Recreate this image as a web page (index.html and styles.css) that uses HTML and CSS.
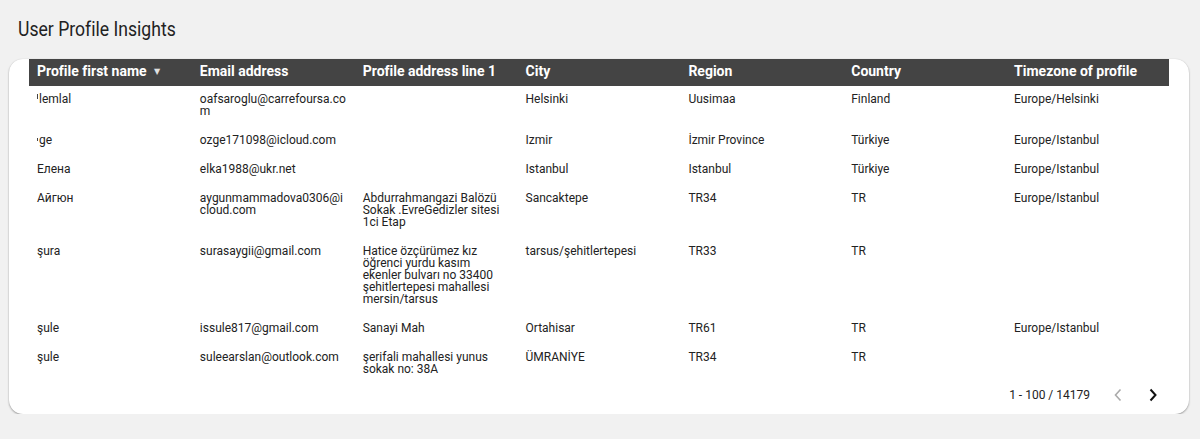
FILE: index.html
```html
<!DOCTYPE html>
<html lang="tr">
<head>
<meta charset="utf-8">
<title>User Profile Insights</title>
<link rel="stylesheet" href="styles.css">
</head>
<body>
<div class="page">
  <h1 class="title"><span class="title-text">User Profile Insights</span></h1>
  <div class="card">
    <div class="grid-wrap">
      <table class="grid">
        <thead>
          <tr>
            <th>Profile first name <span class="sort">&#9660;</span></th>
            <th>Email address</th>
            <th>Profile address line 1</th>
            <th>City</th>
            <th>Region</th>
            <th>Country</th>
            <th>Timezone of profile</th>
          </tr>
        </thead>
        <tbody>
          <tr>
            <td><span class="tick"></span>lemlal</td>
            <td>oafsaroglu@carrefoursa.com</td>
            <td></td>
            <td>Helsinki</td>
            <td>Uusimaa</td>
            <td>Finland</td>
            <td>Europe/Helsinki</td>
          </tr>
          <tr>
            <td><span class="tick low"></span>ge</td>
            <td>ozge171098@icloud.com</td>
            <td></td>
            <td>Izmir</td>
            <td>İzmir Province</td>
            <td>Türkiye</td>
            <td>Europe/Istanbul</td>
          </tr>
          <tr>
            <td>Елена</td>
            <td>elka1988@ukr.net</td>
            <td></td>
            <td>Istanbul</td>
            <td>Istanbul</td>
            <td>Türkiye</td>
            <td>Europe/Istanbul</td>
          </tr>
          <tr>
            <td>Айгюн</td>
            <td>aygunmammadova0306@icloud.com</td>
            <td>Abdurrahmangazi Balözü Sokak .EvreGedizler sitesi 1ci Etap</td>
            <td>Sancaktepe</td>
            <td>TR34</td>
            <td>TR</td>
            <td>Europe/Istanbul</td>
          </tr>
          <tr>
            <td>şura</td>
            <td>surasaygii@gmail.com</td>
            <td>Hatice özçürümez kız öğrenci yurdu kasım ekenler bulvarı no 33400 şehitlertepesi mahallesi mersin/tarsus</td>
            <td>tarsus/şehitlertepesi</td>
            <td>TR33</td>
            <td>TR</td>
            <td></td>
          </tr>
          <tr>
            <td>şule</td>
            <td>issule817@gmail.com</td>
            <td>Sanayi Mah</td>
            <td>Ortahisar</td>
            <td>TR61</td>
            <td>TR</td>
            <td>Europe/Istanbul</td>
          </tr>
          <tr>
            <td>şule</td>
            <td>suleearslan@outlook.com</td>
            <td>şerifali mahallesi yunus sokak no: 38A</td>
            <td>ÜMRANİYE</td>
            <td>TR34</td>
            <td>TR</td>
            <td></td>
          </tr>
        </tbody>
      </table>
    </div>
    <div class="pager">
      <span class="range">1 - 100 / 14179</span>
      <button class="nav disabled" aria-label="Previous page">
        <svg width="10" height="14" viewBox="0 0 10 14"><path d="M7.5 1.5 L2.5 7 L7.5 12.5" fill="none" stroke="currentColor" stroke-width="1.6"/></svg>
      </button>
      <button class="nav" aria-label="Next page">
        <svg width="10" height="14" viewBox="0 0 10 14"><path d="M2.5 1.5 L7.5 7 L2.5 12.5" fill="none" stroke="currentColor" stroke-width="2"/></svg>
      </button>
    </div>
  </div>
</div>
</body>
</html>
```

FILE: styles.css
```css
* { box-sizing: border-box; }

html, body {
  margin: 0;
  background: #f1f1f1;
  font-family: Roboto, "Noto Sans", "DejaVu Sans", sans-serif;
  color: #222;
}

.page {
  padding: 0 11px 0 9px;
}

.title {
  margin: 0;
  padding: 17px 9px 0;
  height: 59px;
  font-size: 20px;
  font-weight: 400;
  line-height: 24px;
  color: #222;
}

.title-text {
  display: inline-block;
  transform: scaleX(0.88);
  transform-origin: left center;
}

.card {
  background: #fff;
  border-radius: 14px;
  box-shadow: 0 1px 2px rgba(0, 0, 0, 0.35), 0 0 1px rgba(0, 0, 0, 0.12);
  padding: 0 20px;
}

.grid-wrap {
  height: 317px;
  overflow: hidden;
}

.grid {
  width: 1140px;
  table-layout: fixed;
  border-collapse: collapse;
}

.grid th {
  background: #444;
  color: #fff;
  font-size: 14px;
  font-weight: 700;
  text-align: left;
  vertical-align: top;
  padding: 0 8px 2px;
  line-height: 24px;
  white-space: nowrap;
}

.sort {
  font-size: 8px;
  color: #e0e0e0;
  margin-left: 4px;
  vertical-align: 2px;
}

.grid td {
  font-size: 12px;
  line-height: 12px;
  padding: 7px 8px 10px;
  vertical-align: top;
  overflow-wrap: anywhere;
  color: #222;
}

.tick {
  display: inline-block;
  width: 1px;
  height: 5px;
  background: #444;
  margin-right: 1px;
  vertical-align: 4px;
}

.tick.low {
  height: 3px;
  vertical-align: 3px;
}

.pager {
  height: 38px;
  display: flex;
  align-items: center;
  justify-content: flex-end;
  padding-right: 2px;
}

.range {
  font-size: 12px;
  color: #222;
  margin-right: 7px;
}

.nav {
  width: 28px;
  height: 28px;
  margin-left: 7px;
  border: 0;
  background: transparent;
  padding: 0;
  display: flex;
  align-items: center;
  justify-content: center;
  color: #111;
}

.nav.disabled {
  color: #aaa;
}
```
